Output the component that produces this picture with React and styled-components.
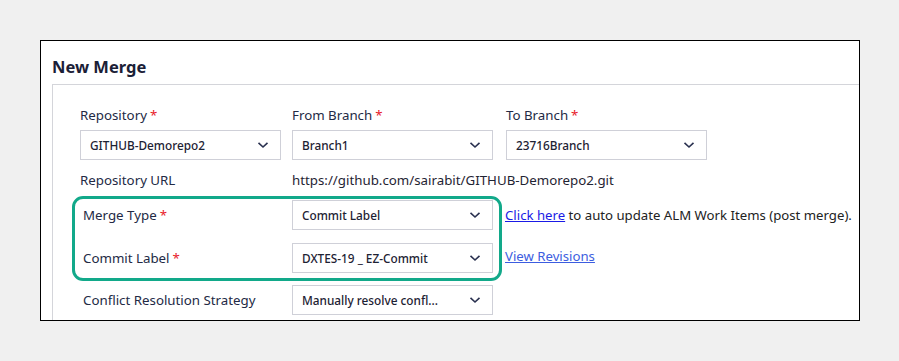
import React from 'react';
import styled, { createGlobalStyle } from 'styled-components';

const GlobalStyle = createGlobalStyle`
  body {
    margin: 0;
    background: #f0f0f0;
    font-family: "Noto Sans", "Liberation Sans", sans-serif;
  }
`;

const Page = styled.div`
  padding: 40px 0 0 40px;
`;

const Card = styled.div`
  position: relative;
  box-sizing: border-box;
  width: 820px;
  height: 281px;
  background: #fff;
  border: 1px solid #000;
  overflow: hidden;
`;

const Title = styled.h2`
  box-sizing: border-box;
  height: 43px;
  margin: 0;
  padding: 14px 0 0 11px;
  font-size: 16.5px;
  font-weight: 700;
  line-height: 24px;
  color: #1b2036;
`;

const Panel = styled.div`
  margin-left: 11px;
  height: 100%;
  border-top: 1px solid #d4d5da;
  border-left: 1px solid #d4d5da;
  padding: 21px 0 0 27px;
`;

const TopGrid = styled.div`
  display: grid;
  grid-template-columns: 212px 214px 201px;
  row-gap: 6px;
`;

const Label = styled.div`
  font-size: 13.3px;
  line-height: 18px;
  color: #232a45;
  white-space: nowrap;
`;

const Req = styled.span`
  color: #e8202a;
  margin-left: 3px;
`;

const SelectBox = styled.div`
  box-sizing: border-box;
  width: 201px;
  height: 30px;
  border: 1px solid #cfd0d8;
  display: flex;
  align-items: center;
  justify-content: space-between;
  padding: 0 11px 0 9px;
  font-size: 11.8px;
  font-weight: 500;
  color: #1d2233;
  white-space: nowrap;
`;

const UrlRow = styled.div`
  display: grid;
  grid-template-columns: 212px auto;
  margin-top: 11px;
  align-items: center;
`;

const Value = styled.div`
  font-size: 13.3px;
  line-height: 18px;
  color: #1f2433;
`;

const LowerGrid = styled.div`
  display: grid;
  grid-template-columns: 209px 213px auto;
  grid-template-rows: 42px 43px 42px;
  align-items: center;
  margin: 5px 0 0 3px;
`;

const Note = styled.div`
  font-size: 13.2px;
  color: #222;
  white-space: nowrap;
  margin-top: ${(p) => (p.$lift ? '-4px' : '0')};
`;

const Link = styled.a`
  color: ${(p) => (p.$light ? '#3c5de0' : '#1a1ae6')};
  text-decoration: underline;
  cursor: pointer;
`;

const Highlight = styled.div`
  position: absolute;
  left: 31px;
  top: 155px;
  width: 430px;
  height: 85px;
  box-sizing: border-box;
  border: 3px solid #12a98a;
  border-radius: 11px;
  pointer-events: none;
`;

const Chevron = () => (
  <svg width="12" height="8" viewBox="0 0 12 8">
    <path d="M1.5 1.8 L6 6 L10.5 1.8" fill="none" stroke="#2a3150" strokeWidth="1.6" />
  </svg>
);

const Select = ({ value }) => (
  <SelectBox>
    <span>{value}</span>
    <Chevron />
  </SelectBox>
);

export default function App() {
  return (
    <>
      <GlobalStyle />
      <Page>
        <Card>
          <Title>New Merge</Title>
          <Panel>
            <TopGrid>
              <Label>Repository<Req>*</Req></Label>
              <Label>From Branch<Req>*</Req></Label>
              <Label>To Branch<Req>*</Req></Label>
              <Select value="GITHUB-Demorepo2" />
              <Select value="Branch1" />
              <Select value="23716Branch" />
            </TopGrid>
            <UrlRow>
              <Label>Repository URL</Label>
              <Value>https://github.com/sairabit/GITHUB-Demorepo2.git</Value>
            </UrlRow>
            <LowerGrid>
              <Label>Merge Type<Req>*</Req></Label>
              <Select value="Commit Label" />
              <Note>
                <Link>Click here</Link> to auto update ALM Work Items (post merge).
              </Note>
              <Label>Commit Label<Req>*</Req></Label>
              <Select value="DXTES-19 _ EZ-Commit" />
              <Note $lift>
                <Link $light>View Revisions</Link>
              </Note>
              <Label>Conflict Resolution Strategy</Label>
              <Select value="Manually resolve confl..." />
              <div />
            </LowerGrid>
          </Panel>
          <Highlight />
        </Card>
      </Page>
    </>
  );
}
